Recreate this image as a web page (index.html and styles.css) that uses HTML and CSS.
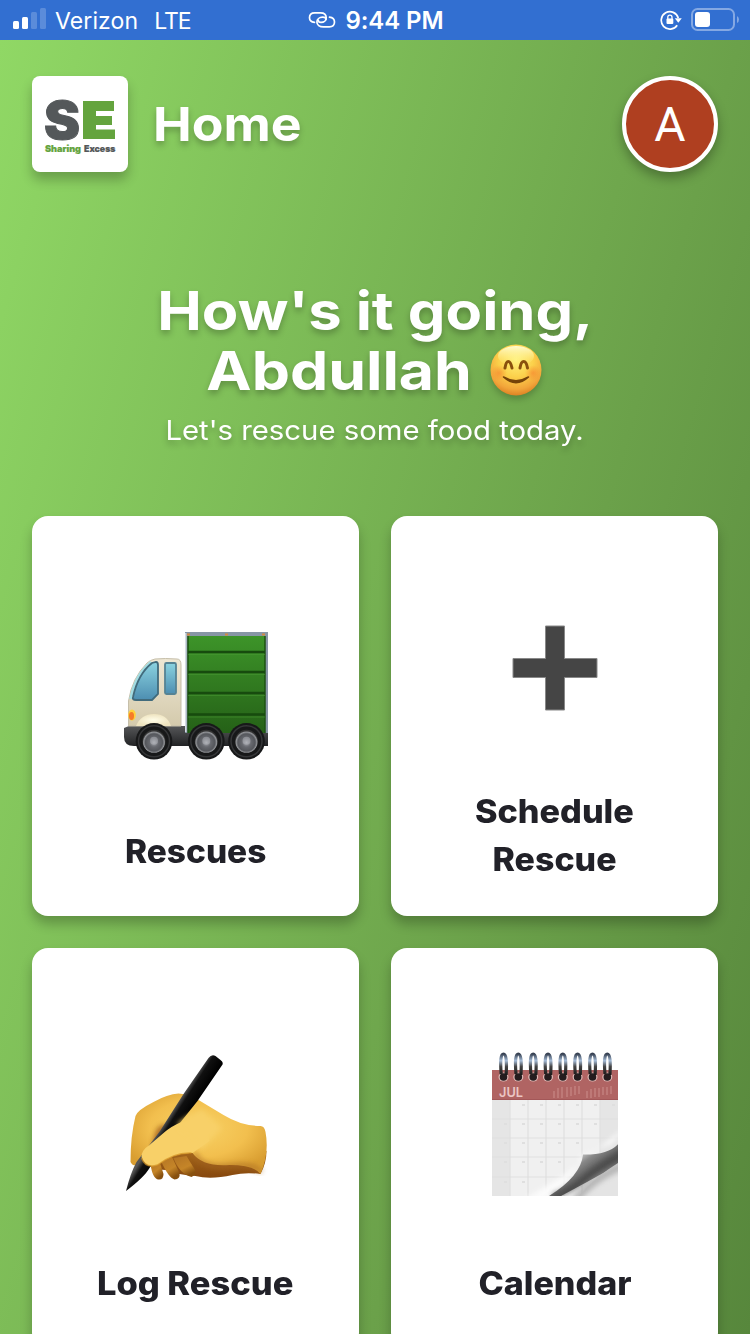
FILE: index.html
```html
<!DOCTYPE html>
<html lang="en">
<head>
<meta charset="utf-8">
<title>Sharing Excess</title>
<link rel="stylesheet" href="styles.css">
</head>
<body>
<div class="status">
  <div class="status-side">
    <svg class="signal" width="34" height="22" viewBox="0 0 34 22" fill="#fff"><rect x="0" y="13" width="6" height="8" rx="1.5"/><rect x="9" y="9" width="6" height="12" rx="1.5"/><g opacity=".2"><rect x="18" y="4" width="6" height="17" rx="1.5"/><rect x="27" y="0" width="6" height="21" rx="1.5"/></g></svg>
    <span class="carrier">Verizon</span><span class="network">LTE</span>
  </div>
  <div class="status-mid">
    <svg width="28" height="18" viewBox="0 0 28 18" fill="none" stroke="#fff" stroke-width="1.700" stroke-linecap="round"><path d="M6.500 11.300C3.300 11 1.500 9.300 1.500 6.700C1.500 3.700 3.500 1.900 6.700 1.900H12.500C16 1.900 18.200 3.900 18.200 6.700C18.200 9.500 16 11.400 13 11.400C11.300 11.400 10.200 10.400 10.200 9"/><path d="M21.500 6.200C24.700 6.500 26.500 8.300 26.500 11C26.500 14 24.500 15.800 21.300 15.800H15.500C11.500 15.800 8.900 13.800 8.900 11C8.900 8.200 11.500 6.200 14.500 6.200C16.500 6.200 18 7.100 18 8.500"/></svg>
    <span class="clock">9:44 PM</span>
  </div>
  <div class="status-end">
    <svg width="22" height="20" viewBox="0 0 22 20"><path d="M17.200 15.200A8.700 8.700 0 1 1 18.300 8" fill="none" stroke="#fff" stroke-width="1.700"/><path d="M14.800 8.300H21.800L18.300 12.800Z" fill="#fff"/><rect x="6.500" y="8.500" width="6.800" height="5.500" rx="1" fill="#fff"/><path d="M7.800 9V7.200a2.100 2.100 0 0 1 4.200 0V9" fill="none" stroke="#fff" stroke-width="1.300"/></svg>
    <svg width="48" height="24" viewBox="0 0 48 24"><rect x="1" y="1" width="42" height="21" rx="5.500" fill="none" stroke="#fff" stroke-opacity=".4" stroke-width="2"/><rect x="4" y="4" width="15" height="15" rx="3" fill="#fff"/><path d="M46 8q2 1 2 3.500t-2 3.500z" fill="#fff" opacity=".4"/></svg>
  </div>
</div>
<main class="page">
  <header class="header">
    <div class="logo">
      <svg width="96" height="96" viewBox="0 0 96 96">
        <text class="logo-letter" x="12" y="63" textLength="36" lengthAdjust="spacingAndGlyphs" fill="#54585a" stroke="#54585a">S</text>
        <path d="M51 25H82V35H64V40H80V49H64V53.500H83V63H51Z" fill="#64a43e"/>
        <text class="logo-name" x="13" y="76" textLength="36" lengthAdjust="spacingAndGlyphs" fill="#64a43e" stroke="#64a43e">Sharing</text>
        <text class="logo-name" x="52" y="76" textLength="31.500" lengthAdjust="spacingAndGlyphs" fill="#54585a" stroke="#54585a">Excess</text>
      </svg>
    </div>
    <h1 class="title"><span class="fit fit-home">Home</span></h1>
    <div class="avatar">A</div>
  </header>
  <section class="greeting">
    <h2 class="hello">
      <span class="line"><span class="fit fit-going">How's it going,</span></span>
      <span class="line"><span class="fit fit-name">Abdullah</span>
        <svg class="smile" width="54" height="54" viewBox="0 0 54 54">
          <defs>
            <radialGradient id="face" cx=".5" cy=".3" r=".72"><stop offset="0" stop-color="#fff27b"/><stop offset=".48" stop-color="#fbd04a"/><stop offset=".8" stop-color="#f2a53a"/><stop offset="1" stop-color="#db7d20"/></radialGradient>
            <radialGradient id="blush"><stop offset="0" stop-color="#f77a2b" stop-opacity=".55"/><stop offset="1" stop-color="#f77a2b" stop-opacity="0"/></radialGradient>
            <linearGradient id="shine" x2="0" y2="1"><stop offset="0" stop-color="#fffbd0"/><stop offset="1" stop-color="#fff27b" stop-opacity="0"/></linearGradient>
          </defs>
          <circle cx="27" cy="27" r="25.500" fill="url(#face)"/><ellipse cx="27" cy="13" rx="18" ry="10" fill="url(#shine)"/>
          <circle cx="10" cy="30" r="8" fill="url(#blush)"/><circle cx="44" cy="30" r="8" fill="url(#blush)"/>
          <path d="M16 25Q17 18.500 19.300 18.500T23 25M31 25Q32 18.500 34.700 18.500T38.500 25" fill="none" stroke="#89500d" stroke-width="3" stroke-linecap="round"/>
          <path d="M14.500 34Q27 45.500 39.500 34Q27 41.500 14.500 34Z" fill="#754309" stroke="#754309" stroke-width="1.500" stroke-linejoin="round"/>
        </svg>
      </span>
    </h2>
    <p class="sub"><span class="fit fit-sub">Let's rescue some food today.</span></p>
  </section>
  <nav class="cards">
    <a class="card">
      <svg class="art" width="144" height="144" viewBox="0 0 144 144">
        <defs>
          <linearGradient id="box" x2="0" y2="1"><stop offset="0" stop-color="#3d9429"/><stop offset="1" stop-color="#256117"/></linearGradient>
          <linearGradient id="cab" x2="0" y2="1"><stop offset="0" stop-color="#eee7d4"/><stop offset="1" stop-color="#d4caac"/></linearGradient>
          <linearGradient id="glass" x2="0" y2="1"><stop offset="0" stop-color="#8bd3e0"/><stop offset="1" stop-color="#4d8eb1"/></linearGradient>
          <linearGradient id="base" x2="0" y2="1"><stop offset="0" stop-color="#555658"/><stop offset="1" stop-color="#222325"/></linearGradient>
          <radialGradient id="hub" cy=".55"><stop offset="0" stop-color="#a9abb1"/><stop offset=".4" stop-color="#67696f"/><stop offset=".75" stop-color="#55575c"/><stop offset=".9" stop-color="#929498"/><stop offset="1" stop-color="#333"/></radialGradient>
          <radialGradient id="arch"><stop offset="0" stop-color="#fffde8"/><stop offset="1" stop-color="#eee3bf"/></radialGradient>
          <g id="wheel"><circle r="18.300" fill="#171819"/><circle r="15.500" fill="none" stroke="#353638" stroke-width="1.500"/><circle r="11.500" fill="url(#hub)"/><circle cy="-.5" r="4" fill="#b5b7bd" opacity=".5"/></g>
        </defs>
        <path d="M0 104L5 102H144V122H10Q0 122 0 113Z" fill="url(#base)"/>
        <rect x="61" y="8" width="83" height="101" fill="#8796a5"/><rect x="61" y="9" width="1.500" height="99" fill="#d4dbe3"/>
        <rect x="64" y="12" width="77" height="97" fill="url(#box)"/>
        <path d="M64 12v97M141 12v97" stroke="#1c5311" stroke-width="1.500"/>
        <path d="M64 28h77M64 48h77M64 69h77M64 90.500h77" stroke="#174b0e" stroke-width="2.600"/>
        <path d="M64 30.500h77M64 50.500h77M64 71.500h77M64 93h77" stroke="#4a9b34" stroke-width="1" opacity=".5"/>
        <path d="M63 10.500h3M101 10.500h3M138 10.500h3" stroke="#d38941" stroke-width="2"/>
        <path d="M31 35Q41 34 53 35Q57 35 57 41V102H4.500V77Q8 54 23 39Q26 36 31 35Z" fill="url(#cab)" stroke="#c6bfaa" stroke-width="1"/>
        <path d="M6.500 75Q11 51 27 38" fill="none" stroke="#a1dce3" stroke-width="2.500"/>
        <path d="M9 73Q14 50 28 39L32 38Q34 38 34 41V70L28 76H12Q8 76 9 73Z" fill="url(#glass)" stroke="#416b7c" stroke-width="1.800"/>
        <rect x="41" y="39" width="11" height="31" rx="1.500" fill="url(#glass)" stroke="#568394" stroke-width="1.800"/>
        <ellipse cx="8" cy="91" rx="3.800" ry="5.500" fill="#ffd23c"/><ellipse cx="7.500" cy="92" rx="2.500" ry="4" fill="#f67b29"/>
        <path d="M12 102Q17 90 30 90T47 102Z" fill="url(#arch)"/>
        <use href="#wheel" x="30" y="117.300"/><use href="#wheel" x="82.300" y="117.300"/><use href="#wheel" x="122.500" y="117.300"/>
      </svg>
      <span class="label"><span class="fit fit-rescues">Rescues</span></span>
    </a>
    <a class="card">
      <svg class="art" width="144" height="144" viewBox="0 0 144 144"><path d="M63.500 32H82.500V64.500H115V83.500H82.500V116H63.500V83.500H31V64.500H63.500Z" transform="translate(-1 -6)" fill="#454545" stroke="#888" stroke-width="1"/></svg>
      <span class="label"><span class="fit fit-schedule">Schedule</span><span class="fit fit-rescue">Rescue</span></span>
    </a>
    <a class="card">
      <svg class="art" width="144" height="144" viewBox="0 0 144 144">
        <defs>
          <radialGradient id="skin" cx=".5" cy=".43" r=".6"><stop offset="0" stop-color="#f8d265"/><stop offset=".6" stop-color="#f2bf4e"/><stop offset="1" stop-color="#d99e31"/></radialGradient>
          <linearGradient id="under" x2="0" y2="1"><stop offset="0" stop-color="#c88a2b"/><stop offset="1" stop-color="#86480f"/></linearGradient>
          <linearGradient id="finger" x2=".5" y2="1"><stop offset="0" stop-color="#b27324"/><stop offset=".65" stop-color="#c58528"/><stop offset="1" stop-color="#87500f"/></linearGradient>
          <linearGradient id="pen" gradientUnits="userSpaceOnUse" x1="50" y1="56" x2="64" y2="65"><stop offset="0" stop-color="#555"/><stop offset=".3" stop-color="#101010"/><stop offset="1" stop-color="#000"/></linearGradient>
          <filter id="soft" x="-20%" y="-20%" width="140%" height="140%"><feGaussianBlur stdDeviation="2.500"/></filter>
        </defs>
        <g transform="translate(-.5 1)">
        <path d="M25 104L29 116L42 117Q55 122 72 123Q87 127 109 122Q122 119 137 121Q143 110 143 98L80 68Z" fill="url(#under)"/>
        <path d="M27 111Q29 126 35 126.500Q40 127 40 121L35 105Z" fill="url(#finger)"/>
        <path d="M37 107Q45 125 51 126.500Q57 126 56 120L48 103Z" fill="url(#finger)"/>
        <path d="M50 105Q56 121 68 124Q74 121 71 116L63 103Z" fill="url(#finger)"/>
        <path d="M7 109Q7 83 12 63Q14 57 30 49Q44 41 55 40.500Q67 41 80 50L100 62Q118 73 137 73Q141 73 142 79Q146 100 137 121Q130 112 106 112Q79 114 69 100Q51 99 34 112Q24 116 17 111Q10 115 7 109Z" fill="url(#skin)"/>
        <path d="M71 100Q79 117 107 113Q129 110 138 119" fill="none" stroke="#a66722" stroke-width="5" opacity=".55" filter="url(#soft)"/>
        <path d="M47 73Q36 69 32 79Q28 91 29 98L46 83Z" fill="#995318" opacity=".75" filter="url(#soft)"/>
        <path d="M2.500 138Q7 120 13 109L36.500 78L60 41L85 5Q88 1 92 3L97 7Q101 10 98 13L74 48L58 68L26 115Q21 124 2.500 138Z" fill="url(#pen)"/>
        <path d="M18 104Q18 97 26 92L40 80Q48 73 58 69L80 70L86 88L69 100Q51 99 34 112Q22 116 18 104Z" fill="#f8d068"/>
        <path d="M54 71Q65 61 79 57L98 75L78 96Z" fill="#f8d068" filter="url(#soft)"/>
        <path d="M18 105Q22 116 34 112Q51 99 68 100" fill="none" stroke="#d39327" stroke-width="1.500" opacity=".7"/>
        </g>
      </svg>
      <span class="label"><span class="fit fit-log">Log Rescue</span></span>
    </a>
    <a class="card">
      <svg class="art" width="144" height="144" viewBox="0 0 144 144">
        <defs>
          <clipPath id="sheet"><rect x="9" y="48" width="126" height="96"/></clipPath>
          <linearGradient id="fold" gradientUnits="userSpaceOnUse" x1="98" y1="100" x2="112" y2="120"><stop offset="0" stop-color="#d0d0d0"/><stop offset=".4" stop-color="#888"/><stop offset="1" stop-color="#555"/></linearGradient>
          <linearGradient id="ring" x2="0" y2="1"><stop offset="0" stop-color="#374152"/><stop offset=".32" stop-color="#a5bcd7"/><stop offset=".6" stop-color="#444"/><stop offset="1" stop-color="#181818"/></linearGradient>
          <g id="coil"><ellipse cy="25" rx="5" ry="4.500" fill="#e0bcb9"/><circle cy="25" r="3.800" fill="#241c1e"/><path d="M-2.300 22Q-4 2 0 2Q4 2 2.600 23" fill="none" stroke="url(#ring)" stroke-width="3.200"/></g>
        </defs>
        <rect x="9" y="18" width="126" height="126" fill="#f0f0f0"/>
        <rect x="9" y="48" width="18" height="96" fill="#e5e5e5"/><rect x="117" y="48" width="18" height="96" fill="#e5e5e5"/>
        <path d="M27 48v96M45 48v96M63 48v96M81 48v96M99 48v96M117 48v96M9 67h126M9 86h126M9 105h126M9 125h126" stroke="#dfdfdf" stroke-width="1.200"/>
        <g fill="#dfdfdf"><path d="M39 52h3v2h-3zM57 52h3v2h-3zM75 52h3v2h-3zM93 52h3v2h-3zM111 52h3v2h-3zM129 52h3v2h-3zM21 71h3v2h-3zM39 71h3v2h-3zM57 71h3v2h-3zM75 71h3v2h-3zM93 71h3v2h-3zM111 71h3v2h-3zM21 90h3v2h-3zM39 90h3v2h-3zM57 90h3v2h-3zM75 90h3v2h-3zM93 90h3v2h-3zM21 109h3v2h-3zM39 109h3v2h-3zM57 109h3v2h-3zM75 109h3v2h-3zM21 129h3v2h-3zM39 129h3v2h-3z"/></g>
        <g clip-path="url(#sheet)">
          <path d="M144 74L128 92L98 104Q92 126 62 148H40L80 124Z" fill="#fbfbfb" filter="url(#soft)"/>
          <path d="M140 84Q133 103 100 102.500Q98 124 66 144H78L104 130L140 110Z" fill="url(#fold)"/>
          <path d="M140 108Q112 124 94 146H144Z" fill="#e4e4e4"/>
          <path d="M140 101Q113 115 101 127Q90 138 70 144" fill="none" stroke="#444" stroke-width="6" opacity=".6" filter="url(#soft)"/>
          <path d="M144 112Q112 124 92 148" fill="none" stroke="#999" stroke-width="8" opacity=".6" filter="url(#soft)"/>
        </g>
        <rect x="9" y="18" width="126" height="30" fill="#b06463"/><path d="M9 47.500h126" stroke="#a35758" stroke-width="1"/>
        <text class="month" x="16" y="45" textLength="24" lengthAdjust="spacingAndGlyphs">JUL</text>
        <path d="M71 39v7M75 36v10M79 35v11M84 35v10M88 35v9M92 34v9M96 34v8M104 39v7M108 37v9M112 36v9M116 36v9M120 35v8M124 35v8M128 34v8" stroke="#d49a98" stroke-width="1.300" opacity=".6"/>
        <use href="#coil" x="20.500"/><use href="#coil" x="35.300"/><use href="#coil" x="50.200"/><use href="#coil" x="65"/><use href="#coil" x="79.800"/><use href="#coil" x="94.600"/><use href="#coil" x="109.500"/><use href="#coil" x="124.300"/>
      </svg>
      <span class="label"><span class="fit fit-calendar">Calendar</span></span>
    </a>
  </nav>
</main>
</body>
</html>
```
FILE: styles.css
```css
* { box-sizing: border-box; }
body { margin: 0; width: 750px; height: 1334px; overflow: hidden; font-family: Inter, "Liberation Sans", sans-serif; color: #fff; }
svg { display: block; flex: none; }
.status { height: 40px; background: #326fd1; display: grid; grid-template-columns: 1fr auto 1fr; align-items: center; padding: 0 12px 0 13px; font-size: 24px; }
.status-side, .status-mid, .status-end { display: flex; align-items: center; }
.status-side { gap: 8px; font-size: 23px; padding-top: 1px; }
.status-mid { gap: 10px; }
.status-end { gap: 9px; justify-content: flex-end; margin-right: -1px; }
.signal { margin-top: -3px; }
.carrier { letter-spacing: .1px; }
.network { margin-left: 8px; letter-spacing: -1px; }
.clock { font-weight: 600; letter-spacing: -.1px; padding-top: 1px; }
.page { height: 1294px; overflow: hidden; padding: 36px 32px 0; background: linear-gradient(106deg, #90d865 0%, #6ba14a 66%, #57873c 100%); }
.header { height: 96px; display: flex; align-items: center; }
.logo { width: 96px; height: 96px; border-radius: 8px; background: #fff; box-shadow: 0 8px 12px rgba(0,0,0,.24); }
.logo-letter { font: 900 52px Inter, sans-serif; stroke-width: 1px; }
.logo-name { font: 900 9px Inter, sans-serif; stroke-width: .2px; }
.title { margin: 0 auto 0 25px; font-size: 47px; line-height: 56px; font-weight: 700; text-shadow: 0 4px 6px rgba(0,0,0,.25); }
.avatar { width: 96px; height: 96px; border: 4px solid #fff; border-radius: 50%; background: #af3f20; display: flex; align-items: center; justify-content: center; font: 400 48px Roboto, sans-serif; padding-top: 1px; box-shadow: 0 6px 12px rgba(0,0,0,.3); }
.greeting { height: 344px; padding-top: 109px; text-align: center; }
.fit { display: inline-block; white-space: nowrap; }
.fit-home { transform: scaleX(1.103); transform-origin: left; }
.fit-going { transform: scaleX(1.105); }
.fit-name { transform: scaleX(1.124); margin: 0 14px; }
.fit-sub { transform: scaleX(1.086); }
.fit-rescues { transform: scaleX(1.044); }
.fit-schedule { transform: scaleX(1.068); }
.fit-rescue { transform: scaleX(1.06); }
.fit-log { transform: scaleX(1.077); }
.fit-calendar { transform: scaleX(1.063); }
.hello { margin: 0; font-size: 54px; line-height: 60px; font-weight: 700; text-shadow: 0 4px 6px rgba(0,0,0,.25); }
.line { display: flex; justify-content: center; align-items: center; height: 60px; gap: 5px; }
.smile { filter: drop-shadow(0 4px 3px rgba(0,0,0,.2)); margin: -3px 0 0 -1px; }
.fit-name { margin-right: 28px; }
.sub { margin: 8px 0 0; font-size: 27px; line-height: 44px; text-shadow: 0 4px 6px rgba(0,0,0,.25); }
.cards { display: grid; grid-template-columns: 1fr 1fr; grid-auto-rows: 400px; gap: 32px; }
.card { background: #fff; border-radius: 16px; box-shadow: 0 8px 12px rgba(0,0,0,.24); display: flex; flex-direction: column; align-items: center; padding-top: 108px; color: #212128; }
.card:nth-child(2) { padding-top: 84px; }
.card:nth-child(n+3) { padding-top: 104px; }
.label { margin-top: 60px; display: flex; flex-direction: column; align-items: center; font-size: 32px; line-height: 48px; font-weight: 800; }
.card:nth-child(2) .label { margin-top: 44px; }
.card:nth-child(n+3) .label { margin-top: 64px; }
.month { font: 600 13px Inter, sans-serif; fill: #ebc6c4; }
```
